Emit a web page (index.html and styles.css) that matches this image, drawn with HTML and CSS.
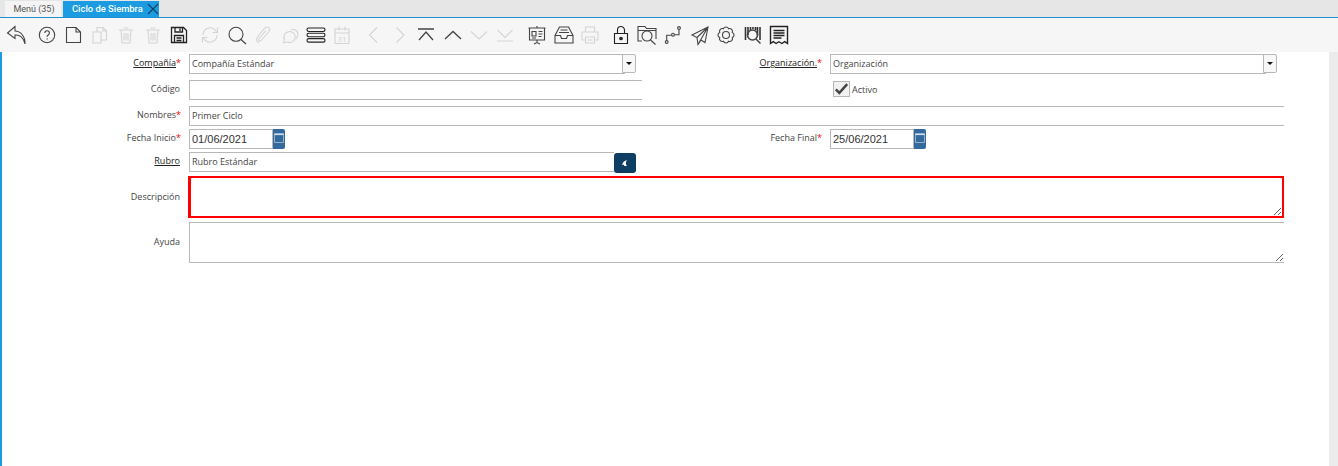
FILE: index.html
```html
<!DOCTYPE html>
<html lang="es">
<head>
<meta charset="utf-8">
<title>Ciclo de Siembra</title>
<link rel="stylesheet" href="styles.css">
</head>
<body>
<div class="tabs">
  <div class="tab">Menú (35)</div>
  <div class="tab active">Ciclo de Siembra<svg class="close" viewBox="0 0 12 12"><path d="M1 1l10 10M11 1L1 11"/></svg></div>
</div>
<div class="toolbar">
  <svg class="ic" viewBox="0 0 22 22"><path d="M10 2.500L2.500 9 10 14.500V11C15 10.500 19 14 20 20 20.500 12 15 7 10 7z"/></svg>
  <svg class="ic help" viewBox="0 0 22 22"><circle cx="11" cy="11" r="7.700"/><path d="M8.800 9c0-3 4.600-3 4.600 0 0 2-2.300 2-2.300 3.800M11.100 14.200v1.200"/></svg>
  <svg class="ic" viewBox="0 0 22 22"><path d="M4.500 3.500H14L18.500 8V18.500H4.500zM14 3.500V8H18.500"/></svg>
  <svg class="ic off" viewBox="0 0 22 22"><path d="M4 8h8v11H4zM8 8V3.500h6l3.500 3.500v9H12M14 3.500V7h3.500"/></svg>
  <svg class="ic off" viewBox="0 0 22 22"><path d="M4 6h14M6 6l1 13h8l1-13M8.500 4h5M9 9v7.500M11 9v7.500M13 9v7.500"/></svg>
  <svg class="ic off" viewBox="0 0 22 22"><path d="M4 6h14M6 6l1 13h8l1-13M8.500 4h5M9 9v7.500M11 9v7.500M13 9v7.500"/></svg>
  <svg class="ic dark save" viewBox="0 0 22 22"><path d="M3.500 3.500h12l3 3v12h-15zM7 3.500V8h7.500V3.500M12 4.500v2.500M6.500 18.500V11.500h9v7M8.500 14h5M8.500 16.500h5" stroke-width="1.300"/></svg>
  <svg class="ic off refresh" viewBox="0 0 22 22"><path d="M4 11a7 7 0 0 1 12-5l2 2.500M18 11a7 7 0 0 1-12 5l-2-2.500M18.500 3.500v5h-5M3.500 18.500v-5h5"/></svg>
  <svg class="ic" viewBox="0 0 22 22"><circle cx="10" cy="10.300" r="7"/><path d="M15 15.500l5 4.500"/></svg>
  <svg class="ic off" viewBox="0 0 22 22"><path d="M7 19c-3-1.500-3-4.500-1-7l7-8c3-2.500 6 .5 4 3.500l-8 9c-2 1-3-.5-2-2l7-8"/></svg>
  <svg class="ic off" viewBox="0 0 22 22"><path d="M12 5.500a5.500 5.500 0 0 1 7 5c0 2-1 3-2 4M8.500 8a5.500 5.500 0 1 1 0 10l-4 .7 1-3a5.500 5.500 0 0 1 3-7.700z"/></svg>
  <svg class="ic dark" viewBox="0 0 22 22"><rect x="2" y="4" width="18" height="3.500" rx="1.700"/><rect x="2" y="9.300" width="18" height="3.500" rx="1.700"/><rect x="2" y="14.600" width="18" height="3.500" rx="1.700"/></svg>
  <svg class="ic off" viewBox="0 0 22 22"><path d="M4 5h14v14.500H4zM4 9h14M8 2.500v4M14 2.500v4"/><text x="11" y="18" class="ictext">31</text></svg>
  <svg class="ic off prev" viewBox="0 0 22 22"><path d="M15 3.500l-7.500 7.500 7.500 7.500"/></svg>
  <svg class="ic off" viewBox="0 0 22 22"><path d="M7.500 3.500l7.500 7.500-7.500 7.500"/></svg>
  <svg class="ic" viewBox="0 0 22 22"><path d="M3 5h16M4 16l7-8 7 8" stroke-width="1.300"/></svg>
  <svg class="ic" viewBox="0 0 22 22"><path d="M3 15l8-7.500 8 7.500" stroke-width="1.300"/></svg>
  <svg class="ic off" viewBox="0 0 22 22"><path d="M3 7.500l8 7.500 8-7.500"/></svg>
  <svg class="ic off" viewBox="0 0 22 22"><path d="M3.500 6l7.500 7.500L18.500 6M3 17h16"/></svg>
  <svg class="ic pres" viewBox="0 0 22 22"><path d="M2.500 4h17M3.500 4v12h15V4M11 2v2M11 16v2.500M8 20l3-1.500 3 1.500M6 7.500h4V12H6zM12.500 7.500h4M12.500 10h4M12.500 12.500h3M6 14h4"/></svg>
  <svg class="ic" viewBox="0 0 22 22"><path d="M6.500 3h9l4.500 8.500V19H2v-7.500zM2 11.500h5.500l1 3h5l1-3H20M7.500 6h7M6 8.500h10"/></svg>
  <svg class="ic off" viewBox="0 0 22 22"><path d="M6.500 8V3h9v5M6.500 16H3V8h16v8h-3.500M6.500 13h9v6h-9zM8.500 16h5"/></svg>
  <svg class="ic dark lock" viewBox="0 0 22 22"><path d="M4.500 9.500h13v10h-13zM7.500 9.500V6a3.500 3.500 0 0 1 7 0v3.500"/><circle cx="11" cy="14.500" r="1.300" class="fill"/></svg>
  <svg class="ic" viewBox="0 0 22 22"><path d="M6 17H2V2.500h7l1.500 2H20V15M2 6.500h18"/><circle cx="11" cy="12" r="5"/><path d="M14.500 16l5 4.500"/></svg>
  <svg class="ic" viewBox="0 0 22 22"><circle cx="4.700" cy="18" r="1.400"/><circle cx="11" cy="10.700" r="1.400"/><circle cx="17" cy="4" r="1.400"/><path d="M4.700 16.600V11.200H9.600M12.400 10.700H17V5.400"/></svg>
  <svg class="ic" viewBox="0 0 22 22"><path d="M19 3L3 11l5 2.500 1 7 3-4.500 4 2.500zM19 3L8 13.500M19 3L9 20.500"/></svg>
  <svg class="ic" viewBox="0 0 22 22"><circle cx="11" cy="11" r="3.500"/><path d="M17.280 13.600A2.800 2.800 0 0 1 13.600 17.280 2.800 2.800 0 0 1 8.400 17.280 2.800 2.800 0 0 1 4.720 13.600 2.800 2.800 0 0 1 4.720 8.400 2.800 2.800 0 0 1 8.400 4.720 2.800 2.800 0 0 1 13.600 4.720 2.800 2.800 0 0 1 17.280 8.400 2.800 2.800 0 0 1 17.280 13.600z"/></svg>
  <svg class="ic" viewBox="0 0 22 22"><path class="bars" d="M3.500 3v13M6 3v8M15.500 3v8M18 3v13M8.500 3v3M11 3v2M13.500 3v3"/><circle cx="10.500" cy="11" r="5" stroke-width="1.600"/><path d="M14 15l4.500 4.500" stroke-width="1.500"/></svg>
  <svg class="ic dark" viewBox="0 0 22 22"><path d="M2.500 2.500h17v17l-2.800-1.800-2.800 1.800-3-1.800-2.800 1.800-2.800-1.800-2.800 1.800zM5.500 6.500h11M5.500 9h11M5.500 11.500h11M5.500 14h8" stroke-width="1.400"/></svg>
</div>
<main class="page">
  <form class="form">
    <div class="row">
      <label class="lbl link req">Compañía</label>
      <div class="cell"><div class="fld combo"><span class="txt">Compañía Estándar</span><span class="drop"></span></div></div>
      <label class="lbl link req">Organización.</label>
      <div class="cell"><div class="fld combo"><span class="txt">Organización</span><span class="drop"></span></div></div>
    </div>
    <div class="row r-code">
      <label class="lbl">Código</label>
      <div class="fld"></div>
      <span></span>
      <div class="check"><span class="box"><svg viewBox="0 0 16 16"><path d="M1.500 8.500l4 4 9-10"/></svg></span>Activo</div>
    </div>
    <div class="row r-name">
      <label class="lbl req">Nombres</label>
      <div class="fld span3"><span class="txt">Primer Ciclo</span></div>
    </div>
    <div class="row r-date">
      <label class="lbl req">Fecha Inicio</label>
      <div class="date"><span class="dinput">01/06/2021</span><span class="cal"><svg viewBox="0 0 12 20"><path d="M1.500 4.500h9v9h-9z"/><path class="calhead" d="M1.500 5.500h9"/></svg></span></div>
      <label class="lbl req">Fecha Final</label>
      <div class="date"><span class="dinput">25/06/2021</span><span class="cal"><svg viewBox="0 0 12 20"><path d="M1.500 4.500h9v9h-9z"/><path class="calhead" d="M1.500 5.500h9"/></svg></span></div>
    </div>
    <div class="row r-date">
      <label class="lbl link">Rubro</label>
      <div class="search"><span class="sinput">Rubro Estándar</span><span class="sbtn"><svg viewBox="0 0 10 10"><path d="M7 2C4.500 2.500 2.500 4.500 2 7L3.500 6.500 4.500 8H7C5.500 6.500 5.500 4 7 2z"/></svg></span></div>
    </div>
    <div class="row r-desc tall">
      <label class="lbl">Descripción</label>
      <textarea class="area red span3"></textarea>
    </div>
    <div class="row r-help tall">
      <label class="lbl">Ayuda</label>
      <textarea class="area span3"></textarea>
    </div>
  </form>
  <div class="scroll"></div>
</main>
</body>
</html>
```
FILE: styles.css
```css
* { box-sizing: border-box; }
html, body { margin: 0; height: 100%; overflow: hidden; background: #fff; }
body { font-family: "Open Sans", sans-serif; font-size: 9px; color: #333; }

.tabs { height: 18px; background: #e6e6e6; border-bottom: 1px solid #1f8ecf; display: flex; padding: 1px 0 0 5px; gap: 2px; }
.tab { height: 16px; width: 56px; background: #f4f4f4; font-family: Roboto, sans-serif; font-size: 9px; line-height: 16px; text-align: center; color: #555; padding-left: 2px; white-space: nowrap; }
.tab.active { width: 96px; background: #1b9ce2; color: #fff; font-weight: 500; text-align: left; padding-left: 9px; display: flex; align-items: center; font-size: 9.400px; }
.close { width: 12px; height: 12px; margin-left: auto; flex: none; fill: none; stroke: #14405f; stroke-width: 1.100; }

.toolbar { height: 34px; background: #f6f6f6; display: flex; align-items: center; padding-left: 5px; gap: 4.400px; }
.ic { width: 22px; height: 22px; flex: none; fill: none; stroke: #444; stroke-width: 1.100; }
.ic.off { stroke: #d4d4d4; }
.ic.dark { stroke: #222; }
.ic.help { margin-left: 4.600px; }
.ic.save { margin-left: .5px; }
.ic.refresh { margin-left: 4.600px; }
.ic.prev { margin-left: 4.600px; }
.ic.pres { margin-left: 5.600px; }
.ic.lock { margin-left: 4.100px; }
.fill { fill: #333; }
.bars { stroke-width: 1.600; stroke: #333; }
.ictext { font-size: 8px; fill: #d4d4d4; stroke: none; text-anchor: middle; font-family: "Open Sans", sans-serif; }

.page { height: 414px; border-left: 2px solid #1b9ce2; display: flex; }
.form { flex: 1; display: flex; flex-direction: column; padding-top: 2px; }
.scroll { width: 9px; background: #ececec; flex: none; }

.row { display: grid; grid-template-columns: 187px 453px 188px 454px; height: 20px; margin-bottom: 6px; }
.r-name { margin-bottom: 3px; }
.r-date { margin-bottom: 3px; }
.r-date + .r-date { margin-bottom: 4px; }
.r-desc { height: 42px; margin-bottom: 4px; }
.r-help { height: 41px; margin-bottom: 0; }

.lbl { text-align: right; padding: 0 9px 4px 0; line-height: 18px; color: #444; white-space: nowrap; font-size: 9px; }
.lbl.link { text-decoration: underline; color: #222; }
.lbl.req::after { content: "*"; color: #e00; display: inline-block; width: 4px; text-align: left; text-decoration: none; }
.tall .lbl { align-self: center; line-height: 14px; padding-bottom: 1px; }

.cell { display: flex; }
.fld { border: 1px solid #b8b8b8; border-right: 0; height: 20px; display: flex; align-items: center; background: #fff; position: relative; }
.combo { width: 436px; height: 20px; }
.span3 { grid-column: 2 / 5; }
.txt { padding: 0 0 2px 2px; color: #444; }
.drop { position: absolute; left: 432px; top: -1px; width: 13.500px; height: 19px; border: 1px solid #b8b8b8; border-radius: 0 2px 2px 0; background: #f8f8f8; }
.drop::after { content: ""; position: absolute; left: 3px; top: 7px; border: 3px solid transparent; border-top-color: #111; border-bottom: 0; }

.check { display: flex; align-items: flex-start; gap: 2px; margin: 1px 0 0 3px; color: #444; line-height: 17px; }
.box { width: 17px; height: 16px; border: 1px solid #b8b8b8; background: #f1f1f1; display: block; }
.box svg { width: 15px; height: 14px; display: block; fill: none; stroke: #444; stroke-width: 2.800; }

.date { display: flex; height: 20px; }
.dinput { width: 84px; height: 20px; border: 1px solid #b8b8b8; font-family: "Liberation Sans", sans-serif; font-size: 11px; line-height: 18px; padding-left: 2px; color: #333; }
.cal { width: 12px; height: 20px; background: #336a9b; border-radius: 0 2px 2px 0; }
.cal svg { display: block; width: 12px; height: 20px; fill: none; stroke: #a9c4da; stroke-width: .8; }
.calhead { stroke: #cfe0ee; stroke-width: 1.200; }

.search { display: flex; }
.sinput { width: 425px; height: 20px; border: 1px solid #b8b8b8; border-right: 0; padding-left: 2px; line-height: 17px; color: #444; }
.sbtn { width: 22px; height: 20px; margin-top: 1px; background: #0f3e63; border-radius: 3px; }
.sbtn svg { display: block; width: 10px; height: 10px; margin: 5px 6px; fill: #fff; }

.area { display: block; width: 100%; height: 100%; border: 1px solid #b8b8b8; border-right: 0; background: #fff; outline: 0; resize: both; margin: 0; padding: 2px; }
.area.red { border: 2px solid #f00; border-left-width: 3px; margin-left: -1px; width: calc(100% + 1px); }
```
